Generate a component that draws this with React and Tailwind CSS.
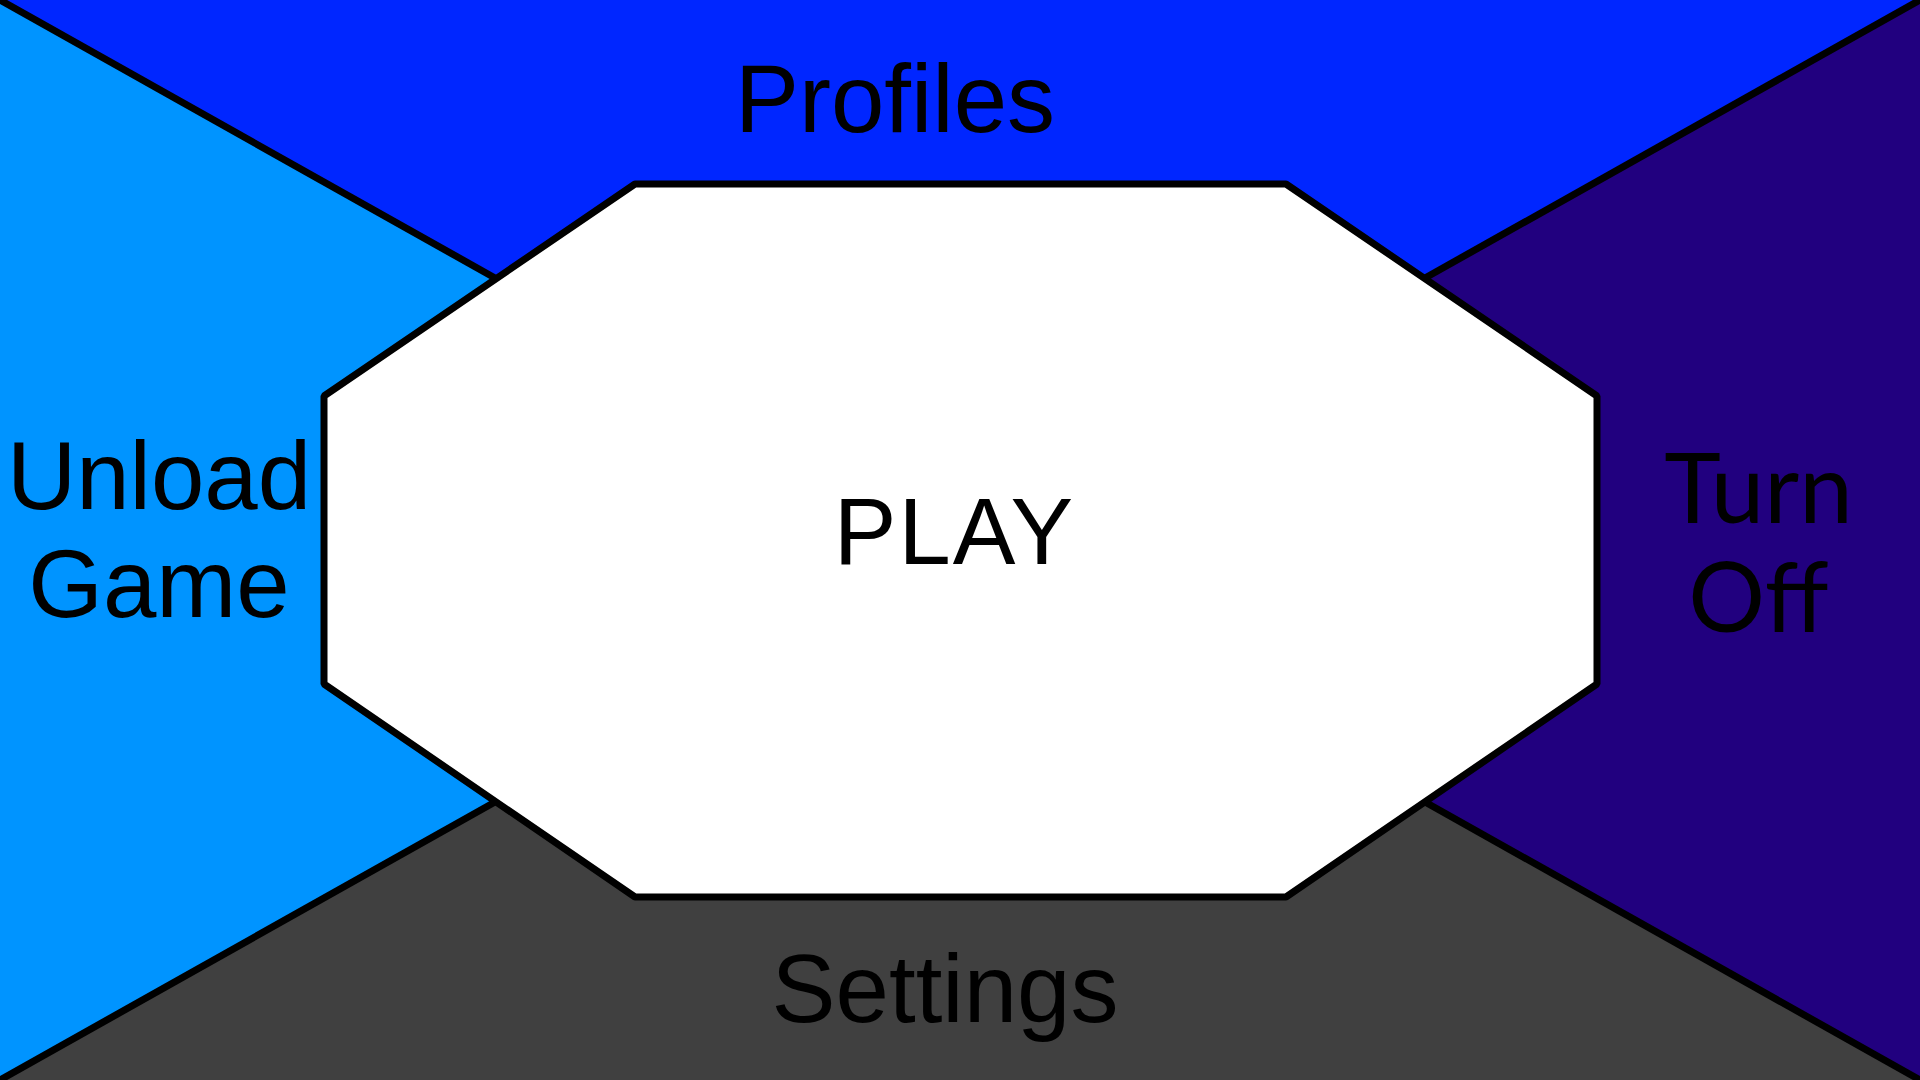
import React from 'react';

const OCTAGON = '635,184 1286,184 1597,396 1597,684 1286,897 635,897 324,684 324,396';

// Background art: four coloured panels meeting the octagon in the middle
const MenuArt = () => (
  <svg className="absolute inset-0" width="1920" height="1080" viewBox="0 0 1920 1080">
    <polygon points="0,0 1920,0 1425,278 1286,184 635,184 495,278" fill="#0026FF" />
    <polygon points="0,0 495,278 324,396 324,684 495,802 0,1080" fill="#0094FF" />
    <polygon points="1920,0 1920,1080 1425,802 1597,684 1597,396 1425,278" fill="#21007F" />
    <polygon points="0,1080 495,802 635,897 1286,897 1425,802 1920,1080" fill="#404040" />
    <polygon points={OCTAGON} fill="#FFFFFF" stroke="#000" strokeWidth="7" strokeLinejoin="bevel" />
    <g stroke="#000" strokeWidth="7">
      <line x1="0" y1="0" x2="495" y2="278" />
      <line x1="1920" y1="0" x2="1425" y2="278" />
      <line x1="0" y1="1080" x2="495" y2="802" />
      <line x1="1920" y1="1080" x2="1425" y2="802" />
    </g>
  </svg>
);

export default function App() {
  return (
    <div className="relative w-[1920px] h-[1080px] overflow-hidden bg-white text-black font-['Liberation_Sans',Arial,sans-serif]">
      <MenuArt />

      <div className="relative grid h-full grid-rows-[184px_713px_183px]">
        {/* Profiles */}
        <div className="flex justify-center pt-[51px] pr-[130px]">
          <span className="text-[96px] leading-[96px]">Profiles</span>
        </div>

        {/* middle row */}
        <div className="grid grid-cols-[324px_1fr_323px]">
          <div className="flex flex-col items-center pt-[238px] pr-[6px] text-[96px] leading-[108px]">
            <span>Unload</span>
            <span>Game</span>
          </div>
          <div className="flex justify-center pt-[301px] pr-[12px]">
            <span className="text-[94px] leading-[94px] tracking-[2px]">PLAY</span>
          </div>
          <div className="flex flex-col items-center pt-[247px] font-['Lato',sans-serif] text-[96px] leading-[109px]">
            <span>Turn</span>
            <span>Off</span>
          </div>
        </div>

        {/* Settings */}
        <div className="flex justify-center pt-[44px] pr-[30px]">
          <span className="text-[96px] leading-[96px]">Settings</span>
        </div>
      </div>
    </div>
  );
}
